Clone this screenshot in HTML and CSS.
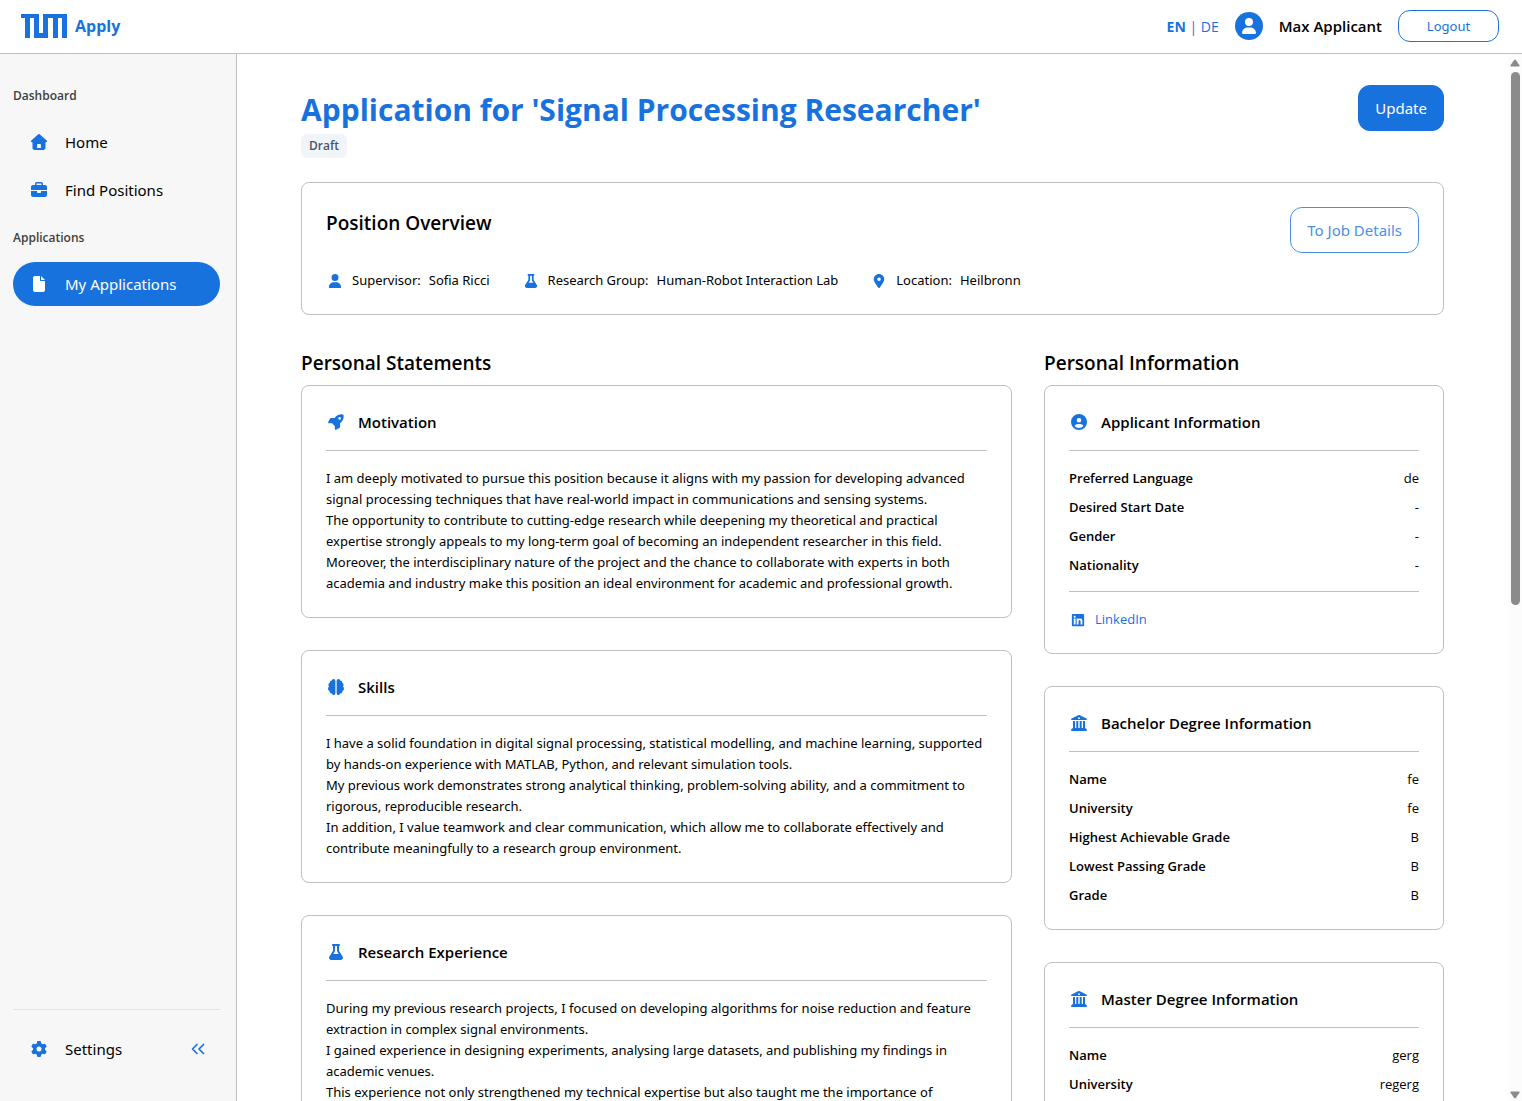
FILE: index.html
```html
<!DOCTYPE html>
<html lang="en">
<head>
<meta charset="utf-8">
<meta name="viewport" content="width=device-width, initial-scale=1">
<title>TUM Apply</title>
<link rel="stylesheet" href="styles.css">
</head>
<body>
<svg class="sprite" aria-hidden="true">
  <symbol id="i-home" viewBox="0 0 16 16"><path fill-rule="evenodd" d="M7.3.3a1 1 0 0 1 1.4 0l7 6.3c.6.6.3 1.6-.6 1.6h-.6v5.6c0 1.3-.8 2.2-2.1 2.2H3.6c-1.300 0-2.100-.9-2.100-2.200V8.200H.9C0 8.200-.3 7.200.3 6.600zM7.100 10c-.6 0-1 .4-1 1v3h3.800v-3c0-.6-.4-1-1-1z"/></symbol>
  <symbol id="i-briefcase" viewBox="0 0 512 512"><path d="M184 48l144 0c4.400 0 8 3.600 8 8l0 40L176 96l0-40c0-4.400 3.600-8 8-8zm-56 8l0 40L64 96C28.700 96 0 124.700 0 160l0 96 192 0 128 0 192 0 0-96c0-35.300-28.700-64-64-64l-64 0 0-40c0-30.900-25.100-56-56-56L184 0c-30.900 0-56 25.100-56 56zM512 288l-192 0 0 32c0 17.700-14.300 32-32 32l-64 0c-17.700 0-32-14.300-32-32l0-32L0 288 0 416c0 35.300 28.700 64 64 64l384 0c35.300 0 64-28.700 64-64l0-128z"/></symbol>
  <symbol id="i-file" viewBox="0 0 384 512"><path d="M0 64C0 28.700 28.700 0 64 0L224 0l0 128c0 17.700 14.300 32 32 32l128 0 0 288c0 35.300-28.700 64-64 64L64 512c-35.300 0-64-28.700-64-64L0 64zm384 64l-128 0L256 0 384 128z"/></symbol>
  <symbol id="i-gear" viewBox="0 0 512 512"><path d="M495.900 166.600c3.200 8.700 .5 18.400-6.400 24.600l-43.300 39.400c1.100 8.300 1.700 16.800 1.700 25.400s-.6 17.100-1.700 25.400l43.300 39.400c6.900 6.200 9.600 15.900 6.400 24.600c-4.400 11.900-9.700 23.300-15.800 34.300l-4.700 8.100c-6.600 11-14 21.400-22.100 31.200c-5.900 7.200-15.700 9.600-24.500 6.800l-55.700-17.700c-13.400 10.300-28.200 18.900-44 25.400l-12.500 57.100c-2 9.100-9 16.300-18.200 17.800c-13.800 2.300-28 3.500-42.500 3.500s-28.700-1.200-42.500-3.500c-9.200-1.500-16.200-8.700-18.200-17.800l-12.500-57.100c-15.800-6.500-30.600-15.100-44-25.400L83.100 425.900c-8.800 2.800-18.600 .3-24.500-6.800c-8.100-9.800-15.500-20.200-22.100-31.200l-4.700-8.100c-6.100-11-11.400-22.400-15.800-34.300c-3.200-8.700-.5-18.400 6.400-24.600l43.300-39.400C64.600 273.100 64 264.600 64 256s.6-17.100 1.700-25.400L22.400 191.200c-6.900-6.200-9.600-15.900-6.400-24.600c4.400-11.900 9.700-23.300 15.800-34.300l4.700-8.100c6.600-11 14-21.400 22.100-31.200c5.900-7.200 15.700-9.600 24.500-6.800l55.700 17.700c13.400-10.300 28.200-18.900 44-25.400l12.500-57.100c2-9.100 9-16.300 18.200-17.800C227.300 1.200 241.500 0 256 0s28.700 1.200 42.500 3.500c9.200 1.500 16.200 8.700 18.200 17.800l12.500 57.100c15.800 6.500 30.600 15.100 44 25.400l55.700-17.700c8.800-2.800 18.600-.3 24.500 6.800c8.100 9.800 15.500 20.200 22.100 31.200l4.700 8.100c6.100 11 11.400 22.400 15.800 34.300zM256 336a80 80 0 1 0 0-160 80 80 0 1 0 0 160z"/></symbol>
  <symbol id="i-collapse" viewBox="0 0 14 12"><path d="M6 1.500 1.500 6 6 10.500M12.500 1.500 8 6l4.500 4.500" fill="none" stroke="currentColor" stroke-width="1.700" stroke-linecap="round" stroke-linejoin="round"/></symbol>
  <symbol id="i-user" viewBox="0 0 448 512"><path d="M224 256A128 128 0 1 0 224 0a128 128 0 1 0 0 256zm-45.700 48C79.800 304 0 383.800 0 482.300C0 498.700 13.300 512 29.700 512l388.600 0c16.400 0 29.700-13.300 29.700-29.700C448 383.800 368.200 304 269.700 304l-91.400 0z"/></symbol>
  <symbol id="i-flask" viewBox="0 0 448 512"><path d="M288 0L160 0 128 0C110.300 0 96 14.300 96 32s14.300 32 32 32l0 132.800c0 11.800-3.300 23.500-9.500 33.500L10.300 406.200C3.600 417.200 0 429.700 0 442.600C0 480.900 31.100 512 69.400 512l309.200 0c38.300 0 69.400-31.100 69.400-69.400c0-12.800-3.600-25.400-10.300-36.400L329.500 230.400c-6.200-10.100-9.500-21.700-9.500-33.500L320 64c17.700 0 32-14.300 32-32s-14.300-32-32-32L288 0zM192 196.800L192 64l64 0 0 132.800c0 23.700 6.600 46.900 19 67.100L309.500 320l-171 0L173 263.900c12.400-20.200 19-43.400 19-67.100z"/></symbol>
  <symbol id="i-pin" viewBox="0 0 384 512"><path d="M215.700 499.200C267 435 384 279.400 384 192C384 86 298 0 192 0S0 86 0 192c0 87.400 117 243 168.300 307.200c12.300 15.300 35.100 15.300 47.400 0zM192 128a64 64 0 1 1 0 128 64 64 0 1 1 0-128z"/></symbol>
  <symbol id="i-circle-user" viewBox="0 0 512 512"><path d="M399 384.200C376.900 345.800 335.400 320 288 320l-64 0c-47.400 0-88.900 25.800-111 64.200c35.200 39.200 86.200 63.800 143 63.800s107.800-24.700 143-63.800zM0 256a256 256 0 1 1 512 0A256 256 0 1 1 0 256zm256 16a72 72 0 1 0 0-144 72 72 0 1 0 0 144z"/></symbol>
  <symbol id="i-linkedin" viewBox="0 0 448 512"><path d="M416 32H31.900C14.300 32 0 46.500 0 64.300v383.400C0 465.500 14.300 480 31.900 480H416c17.600 0 32-14.500 32-32.300V64.300c0-17.800-14.400-32.300-32-32.300zM135.400 416H69V202.200h66.500V416zm-33.200-243c-21.300 0-38.500-17.300-38.500-38.500S80.900 96 102.200 96c21.200 0 38.500 17.300 38.500 38.500 0 21.300-17.200 38.500-38.500 38.500zm282.100 243h-66.400V312c0-24.800-.5-56.700-34.500-56.700-34.600 0-39.900 27-39.900 54.900V416h-66.400V202.200h63.700v29.200h.9c8.900-16.800 30.600-34.500 62.900-34.500 67.200 0 79.700 44.300 79.700 101.900V416z"/></symbol>
  <symbol id="i-rocket" viewBox="0 0 16 16"><path fill-rule="evenodd" d="M15.500.9C15.400.6 15.300.5 15 .4 11.700-.2 8.700.9 6.700 4H3.300c-.6 0-1.100.3-1.400.8L.2 8c-.3.600 0 1.200.7 1.200h3.200l2.700 2.700v3.200c0 .7.700 1 1.300.7l3.200-1.700c.5-.3.8-.8.800-1.400V9.300C15 7.300 16.100 4.200 15.500.9zM11.600 3.100a1.300 1.300 0 1 1 0 2.600 1.300 1.300 0 0 1 0-2.600z"/></symbol>
  <symbol id="i-brain" viewBox="0 0 16 16"><path d="M7.400 1.700v12.600A1.700 1.700 0 0 1 5.700 16c-1 0-1.700-.7-1.900-1.500A2.200 2.200 0 0 1 1.600 12 2.500 2.500 0 0 1 0 9.500c0-.8.4-1.500 1-2a2.300 2.300 0 0 1 .9-3.700A2 2 0 0 1 3.800 1.400 2 2 0 0 1 5.700 0a1.700 1.700 0 0 1 1.700 1.700zM8.600 1.700v12.600a1.700 1.700 0 0 0 1.700 1.700c1 0 1.700-.7 1.900-1.500a2.200 2.200 0 0 0 2.200-2.500A2.500 2.500 0 0 0 16 9.500c0-.8-.4-1.500-1-2a2.300 2.300 0 0 0-.9-3.700 2 2 0 0 0-1.900-2.400A2 2 0 0 0 10.300 0a1.700 1.700 0 0 0-1.700 1.700z"/></symbol>
  <symbol id="i-columns" viewBox="0 0 16 16"><path fill-rule="evenodd" d="M7.600.1a1 1 0 0 1 .8 0l7 3.300c.4.200.6.500.6.900 0 .5-.4.700-.8.700H.8C.4 5 0 4.800 0 4.300c0-.4.2-.7.600-.9zM8 2.300a.9.900 0 1 0 0 1.800.9.900 0 0 0 0-1.800zM2 6h2v7h1.300V6h2v7h1.400V6h2v7H12V6h2v7.100l1.500 1c.8.700.4 1.900-.5 1.900H1c-.9 0-1.300-1.200-.5-1.900l1.500-1z"/></symbol>
</svg>

<header class="topbar">
  <a class="brand" href="#" aria-label="TUM Apply">
    <svg class="brand-logo" viewBox="0 0 46 24" aria-hidden="true"><path d="M0 0h18v19h4V0h24v24h-5V4h-4v20h-5V4h-5v20H13V4H9v20H4V4H0z"/></svg>
    <span>Apply</span>
  </a>
  <div class="account">
    <div class="languages"><a class="lang-active" href="#">EN</a> | <a href="#">DE</a></div>
    <span class="avatar"><svg class="icon" aria-hidden="true"><use href="#i-user"/></svg></span>
    <span class="account-name">Max Applicant</span>
    <button class="logout" type="button">Logout</button>
  </div>
</header>

<div class="shell">
  <aside class="sidebar">
    <nav class="nav">
      <h2 class="nav-label">Dashboard</h2>
      <ul class="nav-list">
        <li><a class="nav-item" href="#"><svg class="icon" aria-hidden="true"><use href="#i-home"/></svg>Home</a></li>
        <li><a class="nav-item" href="#"><svg class="icon" aria-hidden="true"><use href="#i-briefcase"/></svg>Find Positions</a></li>
      </ul>
      <h2 class="nav-label">Applications</h2>
      <ul class="nav-list">
        <li><a class="nav-item nav-item-active" href="#" aria-current="page"><svg class="icon" aria-hidden="true"><use href="#i-file"/></svg>My Applications</a></li>
      </ul>
    </nav>
    <div class="sidebar-footer">
      <a class="nav-item" href="#"><svg class="icon" aria-hidden="true"><use href="#i-gear"/></svg>Settings</a>
      <button class="collapse" type="button" aria-label="Collapse sidebar"><svg aria-hidden="true"><use href="#i-collapse"/></svg></button>
    </div>
  </aside>

  <main class="content">
    <div class="page-head">
      <div>
        <h1 class="page-title">Application for 'Signal Processing Researcher'</h1>
        <span class="badge">Draft</span>
      </div>
      <button class="btn btn-primary" type="button">Update</button>
    </div>

    <section class="card overview">
      <div class="overview-head">
        <h2 class="section-title">Position Overview</h2>
        <button class="btn btn-outline" type="button">To Job Details</button>
      </div>
      <div class="facts">
        <div class="fact"><svg class="icon-small" aria-hidden="true"><use href="#i-user"/></svg><span>Supervisor:</span><span>Sofia Ricci</span></div>
        <div class="fact"><svg class="icon-small" aria-hidden="true"><use href="#i-flask"/></svg><span>Research Group:</span><span>Human-Robot Interaction Lab</span></div>
        <div class="fact"><svg class="icon-small" aria-hidden="true"><use href="#i-pin"/></svg><span>Location:</span><span>Heilbronn</span></div>
      </div>
    </section>

    <div class="columns">
      <section>
        <h2 class="section-title">Personal Statements</h2>
        <div class="stack">
          <article class="card">
            <h3 class="card-title"><svg class="icon" aria-hidden="true"><use href="#i-rocket"/></svg>Motivation</h3>
            <p>I am deeply motivated to pursue this position because it aligns with my passion for developing advanced signal processing techniques that have real-world impact in communications and sensing systems.</p>
            <p>The opportunity to contribute to cutting-edge research while deepening my theoretical and practical expertise strongly appeals to my long-term goal of becoming an independent researcher in this field.</p>
            <p>Moreover, the interdisciplinary nature of the project and the chance to collaborate with experts in both academia and industry make this position an ideal environment for academic and professional growth.</p>
          </article>
          <article class="card">
            <h3 class="card-title"><svg class="icon" aria-hidden="true"><use href="#i-brain"/></svg>Skills</h3>
            <p>I have a solid foundation in digital signal processing, statistical modelling, and machine learning, supported by hands-on experience with MATLAB, Python, and relevant simulation tools.</p>
            <p>My previous work demonstrates strong analytical thinking, problem-solving ability, and a commitment to rigorous, reproducible research.</p>
            <p>In addition, I value teamwork and clear communication, which allow me to collaborate effectively and contribute meaningfully to a research group environment.</p>
          </article>
          <article class="card">
            <h3 class="card-title"><svg class="icon" aria-hidden="true"><use href="#i-flask"/></svg>Research Experience</h3>
            <p>During my previous research projects, I focused on developing algorithms for noise reduction and feature extraction in complex signal environments.</p>
            <p>I gained experience in designing experiments, analysing large datasets, and publishing my findings in academic venues.</p>
            <p>This experience not only strengthened my technical expertise but also taught me the importance of</p>
          </article>
        </div>
      </section>

      <section>
        <h2 class="section-title">Personal Information</h2>
        <div class="stack">
          <article class="card">
            <h3 class="card-title"><svg class="icon" aria-hidden="true"><use href="#i-circle-user"/></svg>Applicant Information</h3>
            <dl class="details">
              <div><dt>Preferred Language</dt><dd>de</dd></div>
              <div><dt>Desired Start Date</dt><dd>-</dd></div>
              <div><dt>Gender</dt><dd>-</dd></div>
              <div><dt>Nationality</dt><dd>-</dd></div>
            </dl>
            <div class="links">
              <a class="fact" href="#"><svg class="icon-small" aria-hidden="true"><use href="#i-linkedin"/></svg>LinkedIn</a>
            </div>
          </article>
          <article class="card">
            <h3 class="card-title"><svg class="icon" aria-hidden="true"><use href="#i-columns"/></svg>Bachelor Degree Information</h3>
            <dl class="details">
              <div><dt>Name</dt><dd>fe</dd></div>
              <div><dt>University</dt><dd>fe</dd></div>
              <div><dt>Highest Achievable Grade</dt><dd>B</dd></div>
              <div><dt>Lowest Passing Grade</dt><dd>B</dd></div>
              <div><dt>Grade</dt><dd>B</dd></div>
            </dl>
          </article>
          <article class="card">
            <h3 class="card-title"><svg class="icon" aria-hidden="true"><use href="#i-columns"/></svg>Master Degree Information</h3>
            <dl class="details">
              <div><dt>Name</dt><dd>gerg</dd></div>
              <div><dt>University</dt><dd>regerg</dd></div>
            </dl>
          </article>
        </div>
      </section>
    </div>
  </main>

  <div class="scrollbar" aria-hidden="true">
    <svg class="scroll-arrow" viewBox="0 0 10 8"><path d="M4 1.200a1.200 1.200 0 0 1 2 0l3.500 5c.4.700 0 1.300-.7 1.300H1.200c-.7 0-1.100-.6-.7-1.300z"/></svg>
    <div class="scroll-track"><div class="scroll-thumb" style="height: 52.6%"></div></div>
    <svg class="scroll-arrow" viewBox="0 0 10 8"><path d="M4 6.800a1.200 1.200 0 0 0 2 0l3.500-5c.4-.7 0-1.300-.7-1.300H1.200c-.7 0-1.100.6-.7 1.300z"/></svg>
  </div>
</div>
</body>
</html>
```
FILE: styles.css
```css
:root {
  --primary: #1872de;
  --border: #bfbfbf;
  --text: #000;
}

* {
  box-sizing: border-box;
}

body {
  margin: 0;
  height: 100vh;
  display: flex;
  flex-direction: column;
  overflow: hidden;
  background: #fff;
  color: var(--text);
  font-family: "Segoe UI", "Open Sans", "Noto Sans", sans-serif;
  font-size: 13px;
  line-height: 21px;
}

h1, h2, h3, p, ul, dl, dd {
  margin: 0;
  padding: 0;
}

ul {
  list-style: none;
}

a {
  color: inherit;
  text-decoration: none;
}

button {
  font: inherit;
  cursor: pointer;
}

svg {
  flex: none;
  fill: currentColor;
}

.sprite {
  position: absolute;
  width: 0;
  height: 0;
}

.icon {
  width: 16px;
  height: 16px;
  color: var(--primary);
}

.icon-small {
  width: 18px;
  height: 14px;
  color: var(--primary);
}

/* Top bar */
.topbar {
  flex: none;
  display: flex;
  align-items: center;
  justify-content: space-between;
  height: 54px;
  padding: 0 23px 1px 21px;
  border-bottom: 1px solid var(--border);
}

.brand {
  display: flex;
  align-items: center;
  gap: 8px;
  color: var(--primary);
  font-size: 16px;
  font-weight: 700;
}

.brand-logo {
  width: 46px;
  height: 24px;
}

.account {
  display: flex;
  align-items: center;
  gap: 16px;
}

.languages {
  color: var(--primary);
  font-size: 14px;
}

.lang-active {
  font-weight: 700;
}

.avatar {
  display: grid;
  place-items: center;
  width: 28px;
  height: 28px;
  border-radius: 50%;
  background: var(--primary);
}

.avatar .icon {
  color: #fff;
}

.account-name {
  font-size: 15px;
  font-weight: 600;
}

.logout {
  width: 101px;
  height: 32px;
  border: 1px solid var(--primary);
  border-radius: 12px;
  background: #fff;
  color: var(--primary);
  font-family: "Segoe UI", "Noto Sans", sans-serif;
}

/* Shell */
.shell {
  flex: 1;
  min-height: 0;
  display: flex;
}

.sidebar {
  flex: none;
  display: flex;
  flex-direction: column;
  justify-content: space-between;
  width: 237px;
  padding: 32px 16px 30px 13px;
  border-right: 1px solid var(--border);
  background: #f7f7f7;
}

.nav-label {
  margin-bottom: 14px;
  color: #404040;
  font-size: 12px;
  font-weight: 600;
  line-height: 20px;
}

.nav-list {
  display: grid;
  gap: 4px;
  margin-bottom: 16px;
}

.nav-item {
  flex: 1;
  display: flex;
  align-items: center;
  gap: 18px;
  height: 44px;
  padding: 0 18px;
  border-radius: 22px;
  font-family: "Segoe UI", "Noto Sans", sans-serif;
  font-size: 15px;
}

.nav-item-active {
  background: var(--primary);
  color: #fff;
}

.nav-item-active .icon {
  color: #fff;
}

.sidebar-footer {
  display: flex;
  align-items: center;
  padding-top: 17px;
  border-top: 1px solid #e2e2e8;
}

.collapse {
  display: flex;
  padding: 15px;
  border: 0;
  background: none;
  color: var(--primary);
}

.collapse svg {
  width: 14px;
  height: 12px;
}

/* Page content */
.content {
  flex: 1;
  min-width: 0;
  overflow-y: auto;
  scrollbar-width: none;
  padding: 31px 64px;
}

.page-head {
  display: flex;
  align-items: flex-start;
  justify-content: space-between;
  margin-bottom: 24px;
}

.page-title {
  color: var(--primary);
  font-size: 30px;
  font-weight: 700;
  line-height: 49px;
}

.badge {
  display: block;
  width: fit-content;
  padding: 0 8px;
  border-radius: 6px;
  background: #f1f5f9;
  color: #475569;
  font-size: 12px;
  font-weight: 600;
  line-height: 24px;
}

.btn {
  height: 46px;
  padding: 0 16px;
  border: 1px solid var(--primary);
  border-radius: 12px;
  font-family: "Segoe UI", "Noto Sans", sans-serif;
  font-size: 15px;
}

.btn-primary {
  background: var(--primary);
  color: #fff;
}

.btn-outline {
  border-color: #4a90e5;
  background: #fff;
  color: #4a90e5;
}

.card {
  padding: 24px 24px 23px;
  border: 1px solid var(--border);
  border-radius: 8px;
}

.card p {
  font-family: "Segoe UI", "Noto Sans", sans-serif;
}

.section-title {
  font-size: 19px;
  font-weight: 600;
  line-height: 32px;
}

.overview {
  margin-bottom: 32px;
}

.overview-head {
  display: flex;
  align-items: flex-start;
  justify-content: space-between;
  margin-bottom: 17px;
}

.facts {
  display: flex;
  flex-wrap: wrap;
  gap: 32px;
  font-family: "Segoe UI", "Noto Sans", sans-serif;
}

.fact {
  display: flex;
  align-items: center;
  gap: 8px;
}

.columns {
  display: grid;
  grid-template-columns: minmax(0, 16fr) minmax(0, 9fr);
  gap: 32px;
}

.stack {
  display: grid;
  gap: 32px;
  margin-top: 6px;
}

.card-title {
  display: flex;
  align-items: center;
  gap: 14px;
  margin-bottom: 17px;
  padding: 0 2px 16px;
  border-bottom: 1px solid var(--border);
  font-size: 15px;
  font-weight: 600;
  line-height: 24px;
}

.details {
  display: grid;
  gap: 8px;
}

.details > div {
  display: flex;
  justify-content: space-between;
}

.details dt {
  font-weight: 600;
}

.links {
  margin-top: 15px;
  padding-top: 17px;
  border-top: 1px solid var(--border);
  color: var(--primary);
}

/* Scroll position indicator */
.scrollbar {
  flex: none;
  display: flex;
  flex-direction: column;
  align-items: center;
  gap: 5px;
  width: 14px;
  padding: 5px 0 2px;
  background: #fcfcfc;
  color: #8b8b8b;
}

.scroll-arrow {
  width: 10px;
  height: 8px;
}

.scroll-track {
  flex: 1;
  width: 9px;
}

.scroll-thumb {
  border-radius: 5px;
  background: #8b8b8b;
}
```
